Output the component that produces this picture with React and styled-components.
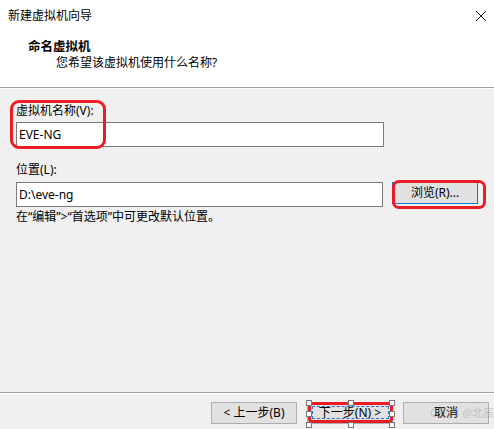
import React from "react";
import styled, { createGlobalStyle } from "styled-components";

// ----------------------------------------

const GlobalStyle = createGlobalStyle`
  html, body {
    margin: 0;
    padding: 0;
    background: #f0f0f0;
  }
  body {
    font-family: "Segoe UI", "Noto Sans", "Noto Sans CJK SC", sans-serif;
    font-size: 12px;
    color: #000;
  }
`;

const Window = styled.div`
  position: relative;
  width: 494px;
  height: 429px;
  display: flex;
  flex-direction: column;
  background: #f0f0f0;
  overflow: hidden;
`;

const TitleBar = styled.div`
  height: 31px;
  display: flex;
  align-items: center;
  justify-content: space-between;
  padding: 0 7px 0 8px;
  background: #fff;
  box-sizing: border-box;
  line-height: 16px;
`;

const Header = styled.div`
  height: 56px;
  padding: 8px 0 0 28px;
  box-sizing: border-box;
  background: #fff;
`;

const HeaderTitle = styled.div`
  font-weight: bold;
  font-size: 12.5px;
  line-height: 16px;
`;

const HeaderSub = styled.div`
  margin-left: 28px;
  line-height: 16px;
`;

const Divider = styled.div`
  border-top: 1px solid #a0a0a0;
  border-bottom: 1px solid #fff;
`;

const Body = styled.div`
  flex: 1;
  padding: 0 16px;
`;

const Label = styled.div`
  line-height: 16px;
  margin-top: ${(props) => props.mt}px;
  margin-bottom: ${(props) => props.mb}px;
`;

const Row = styled.div`
  display: flex;
  align-items: flex-start;
  gap: 9px;
`;

const TextBox = styled.div`
  width: 368px;
  height: 25px;
  box-sizing: border-box;
  border: 1px solid #7a7a7a;
  background: #fff;
  padding: 0 2px;
  display: flex;
  align-items: center;
  font-size: 12px;
`;

const Hint = styled.div`
  margin-top: 2px;
  line-height: 16px;
`;

const Footer = styled.div`
  height: 35px;
  display: flex;
  justify-content: flex-end;
  align-items: flex-start;
  gap: 10px;
  padding: 8px 5px 0 0;
  box-sizing: border-box;
`;

const Button = styled.div`
  width: 86px;
  height: 22px;
  box-sizing: border-box;
  background: #e1e1e1;
  border: 1px solid ${(props) => (props.focused ? "#0078d7" : "#adadad")};
  display: flex;
  align-items: center;
  justify-content: center;
  line-height: 16px;
  font-size: 12px;
`;

const Annotation = styled.div`
  position: absolute;
  left: ${(props) => props.x}px;
  top: ${(props) => props.y}px;
  width: ${(props) => props.w}px;
  height: ${(props) => props.h}px;
  box-sizing: border-box;
  border: 3px solid #ec1c24;
  border-radius: ${(props) => props.r}px;
  pointer-events: none;
`;

const DashLine = styled.div`
  position: absolute;
  inset: 1px;
  border: 1px dashed #2f6fd0;
`;

const Handle = styled.div`
  position: absolute;
  left: ${(props) => props.x}px;
  top: ${(props) => props.y}px;
  width: 4px;
  height: 4px;
  background: #fff;
  border: 1px solid #777;
`;

const Watermark = styled.div`
  position: absolute;
  left: 430px;
  top: 406px;
  font-size: 11px;
  line-height: 14px;
  white-space: nowrap;
  color: rgba(150, 150, 150, 0.45);
  pointer-events: none;
`;

// -------------------------------------

const CloseIcon = () => (
  <svg width="12" height="12" viewBox="0 0 12 12">
    <path d="M1 1L11 11M11 1L1 11" stroke="#111" strokeWidth="1" fill="none" />
  </svg>
);

const handles = [
  [306, 400], [348, 400], [389, 400],
  [306, 411], [389, 411],
  [306, 422], [348, 422], [389, 422],
];

const App = () => {
  return (
    <>
      <GlobalStyle />
      <Window>
        <TitleBar>
          <span>新建虚拟机向导</span>
          <CloseIcon />
        </TitleBar>
        <Header>
          <HeaderTitle>命名虚拟机</HeaderTitle>
          <HeaderSub>您希望该虚拟机使用什么名称?</HeaderSub>
        </Header>
        <Divider />

        <Body>
          <Label mt={14} mb={3}>虚拟机名称(V):</Label>
          <TextBox>EVE-NG</TextBox>

          <Label mt={15} mb={4}>位置(L):</Label>
          <Row>
            <TextBox>D:\eve-ng</TextBox>
            <Button focused>浏览(R)...</Button>
          </Row>
          <Hint>在“编辑”&gt;“首选项”中可更改默认位置。</Hint>
        </Body>

        <Divider />
        <Footer>
          <Button>&lt; 上一步(B)</Button>
          <Button>下一步(N) &gt;</Button>
          <Button>取消</Button>
        </Footer>

        <Annotation x={10} y={100} w={96} h={49} r={9} />
        <Annotation x={392} y={180} w={94} h={29} r={7} />
        <Annotation x={308} y={402} w={85} h={21} r={4}>
          <DashLine />
        </Annotation>
        {handles.map(([x, y], i) => (
          <Handle key={i} x={x} y={y} />
        ))}
        <Watermark>CSDN @北辰</Watermark>
      </Window>
    </>
  );
};

export default App;
